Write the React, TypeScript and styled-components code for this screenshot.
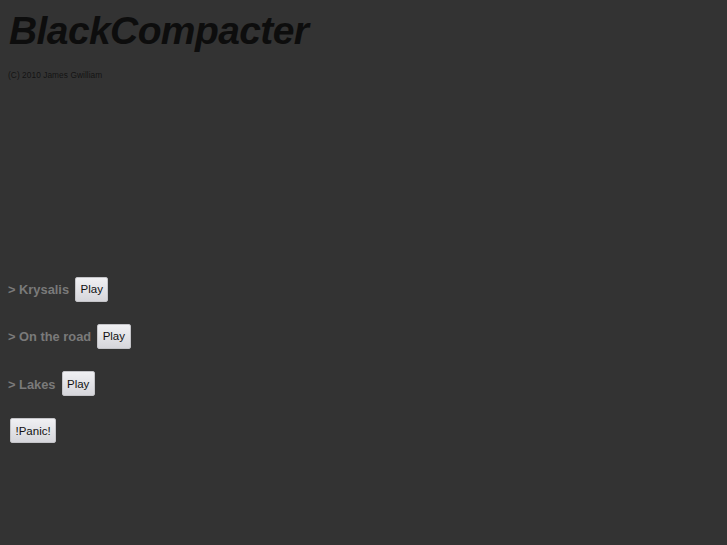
import React from "react";
import styled, { createGlobalStyle } from "styled-components";

const Global = createGlobalStyle`
  html, body { margin: 0; padding: 0; background: #333333; }
  body { font-family: "Liberation Sans", Arial, sans-serif; color: #888; }
`;

const Page = styled.main`
  height: 545px;
  overflow: hidden;
  padding: 7px 8px 0;
  box-sizing: border-box;
  display: flex;
  flex-direction: column;
`;

const Title = styled.h1`
  margin: 0;
  font-size: 39px;
  line-height: 48px;
  font-style: italic;
  font-weight: 700;
  letter-spacing: -0.6px;
  color: #0d0d0d;
  padding-left: 1px;
`;

const Credit = styled.p`
  margin: 14px 0 0;
  font-size: 8.3px;
  line-height: 12px;
  letter-spacing: 0.07px;
  color: #141414;
`;

const Tracks = styled.div`
  margin-top: 196px;
  display: flex;
  flex-direction: column;
  gap: 23.3px;
`;

const Track = styled.div`
  display: flex;
  align-items: center;
  gap: 6px;
  height: 24px;
`;

const TrackName = styled.span`
  font-size: 12.85px;
  font-weight: 700;
  color: #7a7a7a;
  padding-top: 1px;
`;

const Btn = styled.button`
  height: 25px;
  padding: 0 4.5px;
  box-sizing: border-box;
  border: 1px solid #c4c4c8;
  border-radius: 2px;
  background: linear-gradient(#f0f0f3, #d6d6db);
  color: #111;
  font-family: "Liberation Sans", Arial, sans-serif;
  font-size: 11.5px;
`;

const PanicRow = styled(Track)`
  padding-left: 2px;
`;

export default function App() {
  return (
    <Page>
      <Global />
      <Title>BlackCompacter</Title>
      <Credit>(C) 2010 James Gwilliam</Credit>
      <Tracks>
        <Track><TrackName>&gt; Krysalis</TrackName><Btn>Play</Btn></Track>
        <Track><TrackName>&gt; On the road</TrackName><Btn>Play</Btn></Track>
        <Track><TrackName>&gt; Lakes</TrackName><Btn>Play</Btn></Track>
        <PanicRow><Btn>!Panic!</Btn></PanicRow>
      </Tracks>
    </Page>
  );
}
